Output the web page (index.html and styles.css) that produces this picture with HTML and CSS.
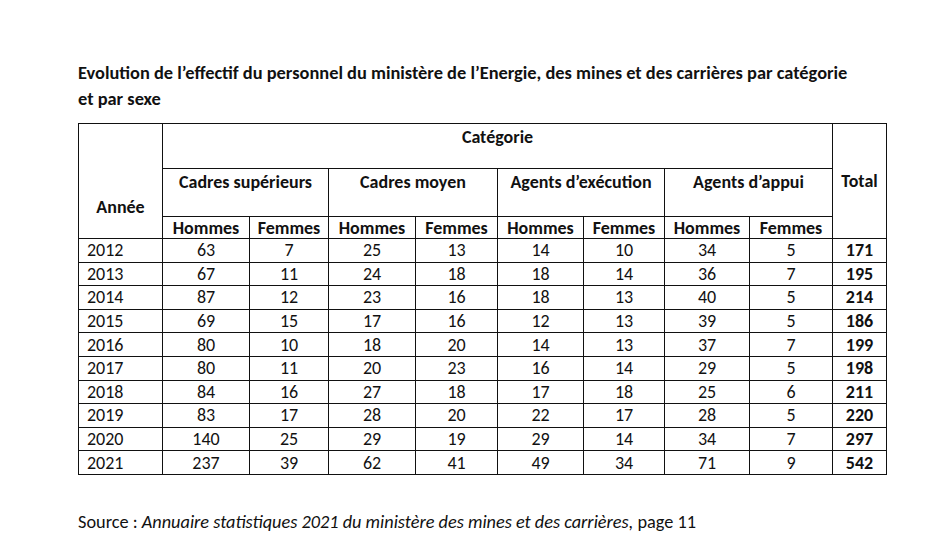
FILE: index.html
```html
<!DOCTYPE html>
<html lang="fr">
<head>
<meta charset="utf-8">
<link rel="stylesheet" href="styles.css">
</head>
<body>
<div class="page">
  <h1 class="title">Evolution de l’effectif du personnel du ministère de l’Energie, des mines et des carrières par catégorie et par sexe</h1>
  <table class="tbl">
    <colgroup>
      <col class="c-year"><col class="c-87"><col class="c-79"><col class="c-87"><col class="c-82"><col class="c-86"><col class="c-81"><col class="c-85"><col class="c-83"><col class="c-total">
    </colgroup>
    <thead>
      <tr class="r1">
        <th rowspan="3" class="annee">Année</th>
        <th colspan="8" class="cat">Catégorie</th>
        <th rowspan="3" class="total-h">Total</th>
      </tr>
      <tr class="r2">
        <th colspan="2" class="grp">Cadres supérieurs</th>
        <th colspan="2" class="grp">Cadres moyen</th>
        <th colspan="2" class="grp">Agents d’exécution</th>
        <th colspan="2" class="grp">Agents d’appui</th>
      </tr>
      <tr class="r3">
        <th>Hommes</th><th>Femmes</th><th>Hommes</th><th>Femmes</th><th>Hommes</th><th>Femmes</th><th>Hommes</th><th>Femmes</th>
      </tr>
    </thead>
    <tbody>
      <tr><td class="yr">2012</td><td>63</td><td>7</td><td>25</td><td>13</td><td>14</td><td>10</td><td>34</td><td>5</td><td class="tot">171</td></tr>
      <tr><td class="yr">2013</td><td>67</td><td>11</td><td>24</td><td>18</td><td>18</td><td>14</td><td>36</td><td>7</td><td class="tot">195</td></tr>
      <tr><td class="yr">2014</td><td>87</td><td>12</td><td>23</td><td>16</td><td>18</td><td>13</td><td>40</td><td>5</td><td class="tot">214</td></tr>
      <tr><td class="yr">2015</td><td>69</td><td>15</td><td>17</td><td>16</td><td>12</td><td>13</td><td>39</td><td>5</td><td class="tot">186</td></tr>
      <tr><td class="yr">2016</td><td>80</td><td>10</td><td>18</td><td>20</td><td>14</td><td>13</td><td>37</td><td>7</td><td class="tot">199</td></tr>
      <tr><td class="yr">2017</td><td>80</td><td>11</td><td>20</td><td>23</td><td>16</td><td>14</td><td>29</td><td>5</td><td class="tot">198</td></tr>
      <tr><td class="yr">2018</td><td>84</td><td>16</td><td>27</td><td>18</td><td>17</td><td>18</td><td>25</td><td>6</td><td class="tot">211</td></tr>
      <tr><td class="yr">2019</td><td>83</td><td>17</td><td>28</td><td>20</td><td>22</td><td>17</td><td>28</td><td>5</td><td class="tot">220</td></tr>
      <tr><td class="yr">2020</td><td>140</td><td>25</td><td>29</td><td>19</td><td>29</td><td>14</td><td>34</td><td>7</td><td class="tot">297</td></tr>
      <tr><td class="yr">2021</td><td>237</td><td>39</td><td>62</td><td>41</td><td>49</td><td>34</td><td>71</td><td>9</td><td class="tot">542</td></tr>
    </tbody>
  </table>
  <p class="source">Source : <em>Annuaire statistiques 2021 du ministère des mines et des carrières,</em> page 11</p>
</div>
</body>
</html>
```

FILE: styles.css
```css
html, body {
  margin: 0;
  padding: 0;
  background: #ffffff;
}
body {
  font-family: "Carlito", "Lato", "Liberation Sans", sans-serif;
  color: #111111;
  font-size: 18px;
}
.page {
  padding: 60px 0 0 78px;
  width: 830px;
}
.title {
  margin: 0 0 11px 0;
  max-width: 775px;
  font-size: 18.4px;
  font-weight: 700;
  line-height: 26px;
}
.tbl {
  border-collapse: collapse;
  table-layout: fixed;
  width: 809px;
}
.c-year { width: 84px; }
.c-87 { width: 87px; }
.c-79 { width: 79px; }
.c-82 { width: 82px; }
.c-86 { width: 86px; }
.c-81 { width: 81px; }
.c-85 { width: 85px; }
.c-83 { width: 83px; }
.c-total { width: 54px; }
.tbl th, .tbl td {
  border: 1px solid #111111;
  padding: 0;
  text-align: center;
  font-size: 18px;
  line-height: 20px;
  white-space: nowrap;
}
.tbl th { font-weight: 700; }
.r1 { height: 45px; }
.r2 { height: 48px; }
.r3 { height: 22px; }
.tbl th.cat { vertical-align: top; padding-top: 3px; }
.tbl th.grp { vertical-align: top; padding-top: 3px; }
.tbl th.annee { vertical-align: top; padding-top: 73px; }
.tbl th.total-h { vertical-align: middle; }
.tbl tbody tr { height: 23.6px; }
.tbl td { vertical-align: middle; }
.tbl td.yr { text-align: left; padding-left: 8px; }
.tbl td.tot { font-weight: 700; }
.source {
  margin: 37px 0 0 0;
  font-size: 18.3px;
  line-height: 20px;
}
```
